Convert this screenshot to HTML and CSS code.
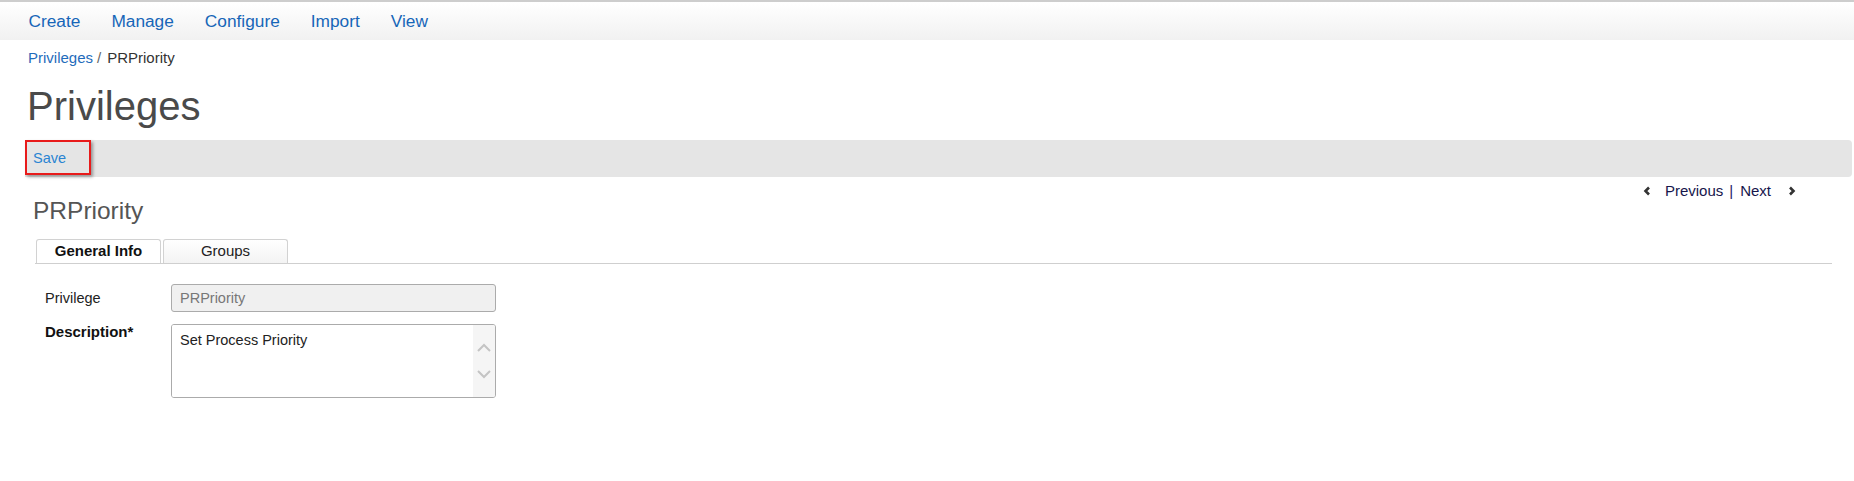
FILE: index.html
```html
<!DOCTYPE html>
<html>
<head>
<meta charset="utf-8">
<title>Privileges</title>
<link rel="stylesheet" href="styles.css">
</head>
<body>
<nav class="topnav">
  <a href="#">Create</a>
  <a href="#">Manage</a>
  <a href="#">Configure</a>
  <a href="#">Import</a>
  <a href="#">View</a>
</nav>
<main class="main">
  <div class="crumbs"><a href="#">Privileges</a><span class="sep">/</span><span class="cur">PRPriority</span></div>
  <h1 class="title">Privileges</h1>
  <div class="toolbar">
    <a href="#" class="save">Save</a>
  </div>
  <div class="head-row">
    <h2 class="subtitle">PRPriority</h2>
    <div class="pager">
      <svg class="chev chev-l" width="8" height="10" viewBox="0 0 8 10"><polyline points="6,1.5 2.5,5 6,8.5" fill="none" stroke="#333" stroke-width="2.6"/></svg>
      <a href="#" class="prev">Previous</a>
      <span class="pipe">|</span>
      <a href="#" class="next">Next</a>
      <svg class="chev chev-r" width="8" height="10" viewBox="0 0 8 10"><polyline points="2,1.5 5.5,5 2,8.5" fill="none" stroke="#333" stroke-width="2.6"/></svg>
    </div>
  </div>
  <div class="tabs">
    <div class="tab active">General Info</div>
    <div class="tab">Groups</div>
  </div>
  <form class="form">
    <label class="lbl lbl-1">Privilege</label>
    <input class="field" type="text" value="PRPriority" readonly>
    <label class="lbl lbl-2"><b>Description*</b></label>
    <div class="areabox">
      <textarea class="area">Set Process Priority</textarea>
      <div class="scroll">
        <svg width="22" height="72" viewBox="0 0 22 72"><polyline points="5,26 11,20 17,26" fill="none" stroke="#c4c4c4" stroke-width="2"/><polyline points="5,46 11,52 17,46" fill="none" stroke="#c4c4c4" stroke-width="2"/></svg>
      </div>
    </div>
  </form>
</main>
</body>
</html>
```

FILE: styles.css
```css
html, body {
  margin: 0;
  padding: 0;
  background: #fff;
}
body {
  font-family: "Liberation Sans", Arial, sans-serif;
  color: #222;
}
a { text-decoration: none; }

.topnav {
  display: flex;
  height: 38px;
  border-top: 2px solid #cdcdcd;
  background: linear-gradient(#ffffff, #f1f1f1);
  padding-left: 13px;
}
.topnav a {
  padding: 0 15.5px;
  line-height: 38px;
  font-size: 17.3px;
  color: #1766b8;
}

.main {
  padding: 0 2px 0 25px;
}
.crumbs {
  margin-top: 8px;
  padding-left: 3px;
  line-height: 20px;
  font-size: 15px;
  display: flex;
}
.crumbs a { color: #1f6cbb; }
.crumbs .sep { color: #666; margin: 0 6px 0 4px; }
.crumbs .cur { color: #333; }

.title {
  margin: 16px 0 0 2px;
  font-size: 40px;
  line-height: 44px;
  font-weight: normal;
  color: #4a4a4a;
}

.toolbar {
  margin-top: 12px;
  height: 37px;
  background: #e5e5e5;
  border-radius: 0 4px 4px 0;
  display: flex;
  align-items: flex-start;
}
.save {
  box-sizing: border-box;
  width: 66px;
  height: 35px;
  border: 2px solid #e81b1b;
  box-shadow: 2px 2px 3px rgba(0,0,0,0.35);
  padding-left: 6px;
  line-height: 32px;
  font-size: 14.5px;
  color: #2a84d2;
}

.head-row {
  display: flex;
  justify-content: space-between;
  align-items: flex-start;
  margin-top: 4px;
}
.subtitle {
  margin: 16px 0 0 8px;
  font-size: 24.5px;
  line-height: 28px;
  font-weight: normal;
  color: #555;
}
.pager {
  display: flex;
  align-items: center;
  height: 20px;
  line-height: 20px;
  font-size: 15px;
  margin-right: 56px;
}
.pager a { color: #16164c; }
.chev-l { margin-right: 14px; }
.pipe { color: #22226a; margin: 0 7px 0 6px; }
.chev-r { margin-left: 17px; }

.tabs {
  display: flex;
  gap: 2px;
  margin: 14px 20px 0 10px;
  border-bottom: 1px solid #cfcfcf;
  padding-left: 1px;
}
.tab {
  box-sizing: border-box;
  width: 125px;
  height: 24px;
  border: 1px solid #d2d2d2;
  border-bottom: none;
  border-radius: 3px 3px 0 0;
  background: linear-gradient(#ffffff, #f3f3f3);
  text-align: center;
  line-height: 22px;
  font-size: 15px;
  color: #222;
}
.tab.active {
  background: #fff;
  font-weight: bold;
  color: #111;
}

.form {
  display: grid;
  grid-template-columns: 126px 325px;
  row-gap: 12px;
  margin-top: 20px;
  padding-left: 20px;
  align-items: start;
}
.lbl {
  font-size: 14.5px;
  line-height: 20px;
  color: #222;
}
.lbl-1 { padding-top: 4px; }
.lbl-2 { margin-top: -2px; color: #111; font-size: 15px; }

.field {
  box-sizing: border-box;
  width: 325px;
  height: 28px;
  margin: 0;
  border: 1px solid #ababab;
  border-radius: 3px;
  background: #f0f0f0;
  padding: 0 8px;
  font-family: "Liberation Sans", Arial, sans-serif;
  font-size: 14.5px;
  color: #777;
  outline: none;
}

.areabox {
  box-sizing: border-box;
  width: 325px;
  height: 74px;
  border: 1px solid #ababab;
  border-radius: 3px;
  display: flex;
  background: #fff;
  overflow: hidden;
}
.area {
  flex: 1;
  border: none;
  resize: none;
  outline: none;
  margin: 0;
  padding: 6px 8px;
  font-family: "Liberation Sans", Arial, sans-serif;
  font-size: 14.5px;
  line-height: 18px;
  color: #222;
  overflow: hidden;
  background: #fff;
}
.scroll {
  width: 22px;
  background: #f5f5f5;
  display: flex;
}
```
